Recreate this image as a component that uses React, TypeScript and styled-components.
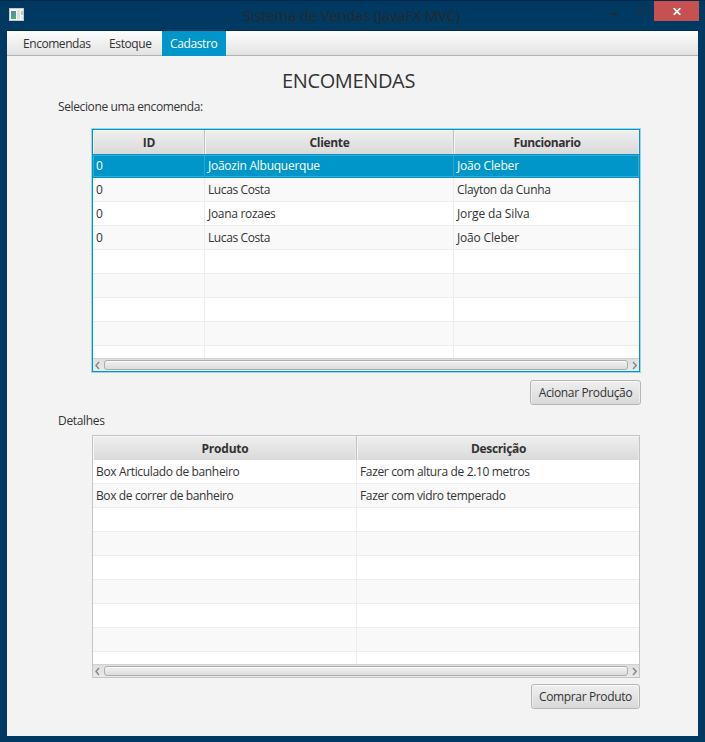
import React from 'react';
import styled, { createGlobalStyle, css } from 'styled-components';

const GlobalStyle = createGlobalStyle`
  * { box-sizing: border-box; }
  body { margin: 0; overflow: hidden; }
`;

const Frame = styled.div`
  display: flex;
  flex-direction: column;
  width: 705px;
  height: 742px;
  padding: 0 7px 6px;
  background: #003a62;
  border-top: 1px solid #00294a;
  color: #333;
  font: 12px 'Open Sans', 'Noto Sans', sans-serif;
  letter-spacing: -0.33px;
  white-space: nowrap;
`;

const TitleBar = styled.header`
  display: grid;
  grid-template-columns: 155px 1fr 155px;
  height: 30px;
  flex: none;
  margin-right: -1px;
  border-bottom: 1px solid #002c50;
`;

const AppIcon = styled.svg`
  display: block;
  margin: 7px 0 0 2px;
`;

const Title = styled.h1`
  margin: 0;
  padding: 1px 3px 0 0;
  color: #25282c;
  font-size: 15px;
  font-weight: 400;
  line-height: 27px;
  letter-spacing: -0.26px;
  text-align: center;
`;

const WindowControls = styled.div`
  display: flex;
  justify-content: flex-end;
  align-items: flex-start;
`;

const ControlIcon = styled.svg`
  display: block;
`;

const CloseButton = styled.button`
  display: flex;
  justify-content: center;
  align-items: center;
  width: 45px;
  height: 20px;
  margin: 0 0 0 6px;
  padding: 0;
  border: 0;
  background: #c75050;
`;

const Client = styled.main`
  display: flex;
  flex-direction: column;
  flex: 1;
  width: 691px;
  background: #f3f3f3;
`;

const MenuBar = styled.nav`
  display: flex;
  flex: none;
  height: 25px;
  padding-left: 8px;
  background: linear-gradient(#fdfdfd, #e2e2e2);
  box-shadow: inset 0 -1px #b2b2b2;
`;

const MenuItem = styled.span<{ $width: number; $active?: boolean; $track?: number }>`
  width: ${p => p.$width}px;
  padding-left: 8px;
  line-height: 25px;
  letter-spacing: ${p => p.$track ?? -0.38}px;
  ${p => p.$active && css`
    background: #0096c9;
    color: #fff;
  `}
`;

const Heading = styled.h2`
  margin: 10px 0 0;
  padding-right: 8px;
  font-size: 20px;
  font-weight: 400;
  line-height: 30px;
  letter-spacing: -0.36px;
  text-align: center;
`;

const Label = styled.p<{ $top: number; $track?: number }>`
  margin: ${p => p.$top}px 0 0 51px;
  line-height: 16px;
  letter-spacing: ${p => p.$track ?? -0.33}px;
`;

const Table = styled.section<{ $top: number; $height: number; $columns: string; $focused?: boolean }>`
  --columns: ${p => p.$columns};
  display: flex;
  flex-direction: column;
  flex: none;
  width: 548px;
  height: ${p => p.$height}px;
  margin: ${p => p.$top}px 0 0 85px;
  border: 1px solid ${p => (p.$focused ? '#0096c9' : '#c4c4c4')};
  box-shadow: ${p => (p.$focused ? '0 0 0 1px #9bd5e8' : 'none')};
`;

const HeaderRow = styled.div<{ $height: number }>`
  display: grid;
  grid-template-columns: var(--columns);
  flex: none;
  height: ${p => p.$height}px;
  border-bottom: 1px solid #c1c1c1;
`;

const HeaderCell = styled.div<{ $track?: number }>`
  padding-left: 1px;
  border-right: 1px solid #c1c1c1;
  background: linear-gradient(#efefef, #d9d9d9);
  box-shadow: inset 1px 1px #f6f6f6, inset -1px 0 #e9e9e9;
  font-weight: 700;
  line-height: 25px;
  letter-spacing: ${p => p.$track ?? -0.3}px;
  text-align: center;
  &:last-child { border-right: 0; }
`;

const Body = styled.div`
  flex: 1;
  min-height: 0;
  overflow: hidden;
`;

const Row = styled.div<{ $alt: boolean; $selected?: boolean }>`
  display: grid;
  grid-template-columns: var(--columns);
  height: 24px;
  background: ${p => (p.$alt ? '#f9f9f9' : '#fff')};
  border-bottom: 1px solid #ededed;
  ${p => p.$selected && css`
    background: #0096c9;
    border-bottom-color: #0096c9;
    box-shadow: inset 0 1px #0096c9, inset 1px 2px #35abd4, inset -1px -1px #35abd4;
    color: #fff;
  `}
`;

const Cell = styled.div<{ $selected?: boolean; $track?: number }>`
  padding-left: 3px;
  border-right: 1px solid ${p => (p.$selected ? '#2ca7d2' : '#ededed')};
  line-height: 23px;
  letter-spacing: ${p => p.$track ?? -0.35}px;
  &:last-child { border-right: 0; }
`;

const ScrollBar = styled.div`
  display: flex;
  align-items: center;
  flex: none;
  height: 13px;
  padding-top: 1px;
  background: linear-gradient(#dedede, #eaeaea);
  box-shadow: inset 0 1px #d2d2d2;
`;

const Arrow = styled.svg`
  display: block;
  width: 11px;
  height: 11px;
  flex: none;
`;

const Thumb = styled.div`
  width: 525px;
  height: 10px;
  border: 1px solid #adadad;
  border-radius: 3px;
  background: linear-gradient(#f2f2f2, #dcdcdc);
  box-shadow: inset 0 1px #fafafa;
`;

const ActionButton = styled.button<{ $top: number; $width: number; $right: number }>`
  align-self: flex-end;
  flex: none;
  width: ${p => p.$width}px;
  height: 25px;
  margin: ${p => p.$top}px ${p => p.$right}px 0 0;
  padding: 0;
  border: 1px solid #b5b5b5;
  border-radius: 3px;
  background: linear-gradient(#efefef, #d9d9d9);
  box-shadow: inset 0 1px #fafafa, inset 1px 0 #eeeeee, inset -1px 0 #eeeeee;
  color: #333;
  font: inherit;
  line-height: 23px;
  letter-spacing: -0.36px;
`;

type Text = { text: string; track?: number };
type DataTableProps = {
  top: number;
  height: number;
  headerHeight: number;
  columns: string;
  headers: Text[];
  rows: Text[][];
  focused?: boolean;
};

const VISIBLE_ROWS = 9;

function DataTable({ top, height, headerHeight, columns, headers, rows, focused }: DataTableProps) {
  return (
    <Table $top={top} $height={height} $columns={columns} $focused={focused}>
      <HeaderRow $height={headerHeight}>
        {headers.map(h => <HeaderCell key={h.text} $track={h.track}>{h.text}</HeaderCell>)}
      </HeaderRow>
      <Body>
        {Array.from({ length: VISIBLE_ROWS }, (_, i) => {
          const selected = focused && i === 0;
          return (
            <Row key={i} $alt={i % 2 === 1} $selected={selected}>
              {headers.map((h, c) => (
                <Cell key={h.text} $selected={selected} $track={rows[i]?.[c].track}>{rows[i]?.[c].text}</Cell>
              ))}
            </Row>
          );
        })}
      </Body>
      <ScrollBar>
        <Arrow viewBox="0 0 11 11"><path d="M6 2 3 5.5 6 9" fill="none" stroke="#858585" strokeWidth="1.4" /></Arrow>
        <Thumb />
        <Arrow viewBox="0 0 11 11"><path d="M5 2 8.2 5.5 5 9" fill="none" stroke="#858585" strokeWidth="1.4" /></Arrow>
      </ScrollBar>
    </Table>
  );
}

const lucas: Text = { text: 'Lucas Costa', track: -0.4 };
const joao: Text = { text: 'João Cleber', track: -0.17 };
const zero: Text = { text: '0' };

const orders: Text[][] = [
  [zero, { text: 'Joãozin Albuquerque', track: -0.25 }, joao],
  [zero, lucas, { text: 'Clayton da Cunha', track: -0.32 }],
  [zero, { text: 'Joana rozaes', track: -0.3 }, { text: 'Jorge da Silva', track: -0.12 }],
  [zero, lucas, joao],
];

const details: Text[][] = [
  [{ text: 'Box Articulado de banheiro' }, { text: 'Fazer com altura de 2.10 metros' }],
  [{ text: 'Box de correr de banheiro', track: -0.38 }, { text: 'Fazer com vidro temperado' }],
];

export default function App() {
  return (
    <Frame>
      <GlobalStyle />
      <TitleBar>
        <AppIcon width="16" height="14" viewBox="0 0 16 14">
          <defs>
            <linearGradient id="pane" x1="0" y1="0" x2="0.6" y2="1">
              <stop offset="0" stopColor="#5b83b5" />
              <stop offset="1" stopColor="#4dab7c" />
            </linearGradient>
          </defs>
          <rect x="0.5" y="0.5" width="14" height="12" fill="#f5f5f5" stroke="#c5c9cb" />
          <rect x="2" y="3" width="5" height="8" fill="url(#pane)" />
          <rect x="8" y="2" width="3" height="9" fill="#dedfe5" />
          <rect x="12" y="3" width="2" height="4" fill="#a8d2bd" />
          <rect x="12" y="8" width="2" height="3" fill="#e3e5e8" />
        </AppIcon>
        <Title>Sistema de Vendas (JavaFX MVC)</Title>
        <WindowControls>
          <ControlIcon width="38" height="20" viewBox="0 0 38 20">
            <path d="M0 12h8v2H0z" fill="#25282c" />
            <path d="M26.5 6.5h9v7h-9zM27 8h8" fill="none" stroke="#1a3246" />
          </ControlIcon>
          <CloseButton aria-label="Fechar">
            <svg width="8" height="7" viewBox="0 0 8 7"><path d="M.7.2 7.3 6.8M7.3.2.7 6.8" stroke="#fff" strokeWidth="1.8" /></svg>
          </CloseButton>
        </WindowControls>
      </TitleBar>
      <Client>
        <MenuBar>
          <MenuItem $width={86} $track={-0.45}>Encomendas</MenuItem>
          <MenuItem $width={61}>Estoque</MenuItem>
          <MenuItem $width={64} $active>Cadastro</MenuItem>
        </MenuBar>
        <Heading>ENCOMENDAS</Heading>
        <Label $top={3} $track={-0.38}>Selecione uma encomenda:</Label>
        <DataTable
          focused
          top={14}
          height={243}
          headerHeight={24}
          columns="112px 249px 1fr"
          headers={[{ text: 'ID' }, { text: 'Cliente' }, { text: 'Funcionario', track: -0.39 }]}
          rows={orders}
        />
        <ActionButton $top={8} $width={111} $right={57}>Acionar Produção</ActionButton>
        <Label $top={8}>Detalhes</Label>
        <DataTable
          top={6}
          height={243}
          headerHeight={24}
          columns="264px 1fr"
          headers={[{ text: 'Produto', track: -0.22 }, { text: 'Descrição', track: -0.34 }]}
          rows={details}
        />
        <ActionButton $top={6} $width={109} $right={58}>Comprar Produto</ActionButton>
      </Client>
    </Frame>
  );
}
